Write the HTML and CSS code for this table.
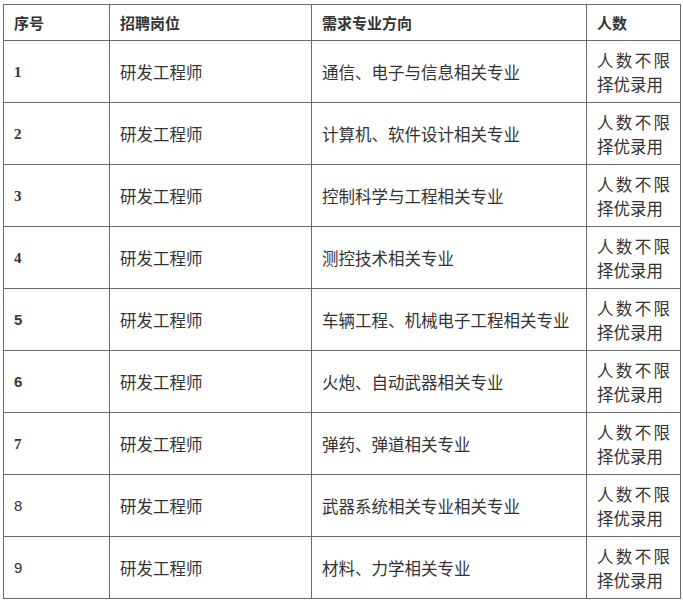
FILE: index.html
```html
<!DOCTYPE html>
<html lang="zh">
<head>
<meta charset="utf-8">
<title>招聘岗位</title>
<link rel="stylesheet" href="styles.css">
</head>
<body>
<div class="wrap">
<table class="jobs">
  <colgroup>
    <col class="c1"><col class="c2"><col class="c3"><col class="c4">
  </colgroup>
  <thead>
    <tr><th>序号</th><th>招聘岗位</th><th>需求专业方向</th><th>人数</th></tr>
  </thead>
  <tbody>
    <tr><td class="num serif">1</td><td>研发工程师</td><td>通信、电子与信息相关专业</td><td class="count">人数不限择优录用</td></tr>
    <tr><td class="num serif">2</td><td>研发工程师</td><td>计算机、软件设计相关专业</td><td class="count">人数不限择优录用</td></tr>
    <tr><td class="num serif">3</td><td>研发工程师</td><td>控制科学与工程相关专业</td><td class="count">人数不限择优录用</td></tr>
    <tr><td class="num serif">4</td><td>研发工程师</td><td>测控技术相关专业</td><td class="count">人数不限择优录用</td></tr>
    <tr><td class="num sans">5</td><td>研发工程师</td><td>车辆工程、机械电子工程相关专业</td><td class="count">人数不限择优录用</td></tr>
    <tr><td class="num sans">6</td><td>研发工程师</td><td>火炮、自动武器相关专业</td><td class="count">人数不限择优录用</td></tr>
    <tr><td class="num serif">7</td><td>研发工程师</td><td>弹药、弹道相关专业</td><td class="count">人数不限择优录用</td></tr>
    <tr><td class="num thin">8</td><td>研发工程师</td><td>武器系统相关专业相关专业</td><td class="count">人数不限择优录用</td></tr>
    <tr><td class="num thin">9</td><td>研发工程师</td><td>材料、力学相关专业</td><td class="count">人数不限择优录用</td></tr>
  </tbody>
</table>
</div>
</body>
</html>
```

FILE: styles.css
```css
html, body {
  margin: 0;
  padding: 0;
  background: #ffffff;
}

.wrap {
  padding: 4px 0 0 3px;
}

.jobs {
  border-collapse: collapse;
  table-layout: fixed;
  width: 677px;
  font-family: "Noto Sans CJK SC", "Noto Sans", sans-serif;
  color: #333333;
  font-size: 16.5px;
  line-height: 24px;
}

.c1 { width: 106px; }
.c2 { width: 202px; }
.c3 { width: 275px; }
.c4 { width: 94px; }

.jobs th,
.jobs td {
  border: 1px solid #6b6b6b;
  padding: 0 10px;
  vertical-align: middle;
  text-align: left;
}

.jobs th {
  height: 35px;
  font-size: 15px;
  font-weight: bold;
  color: #333333;
}

.jobs td {
  height: 61px;
  font-weight: 400;
}

.jobs td.count {
  text-align: justify;
  line-height: 24px;
}

.jobs td.num {
  font-size: 15px;
}

.jobs td.serif {
  font-family: "Liberation Serif", "DejaVu Serif", serif;
  font-weight: bold;
  color: #333333;
}

.jobs td.sans {
  font-family: "Liberation Sans", Arial, sans-serif;
  font-weight: bold;
  color: #3a3a3a;
}

.jobs td.thin {
  font-family: "Liberation Sans", Arial, sans-serif;
  font-weight: 400;
  font-size: 15px;
  color: #333333;
}
```
